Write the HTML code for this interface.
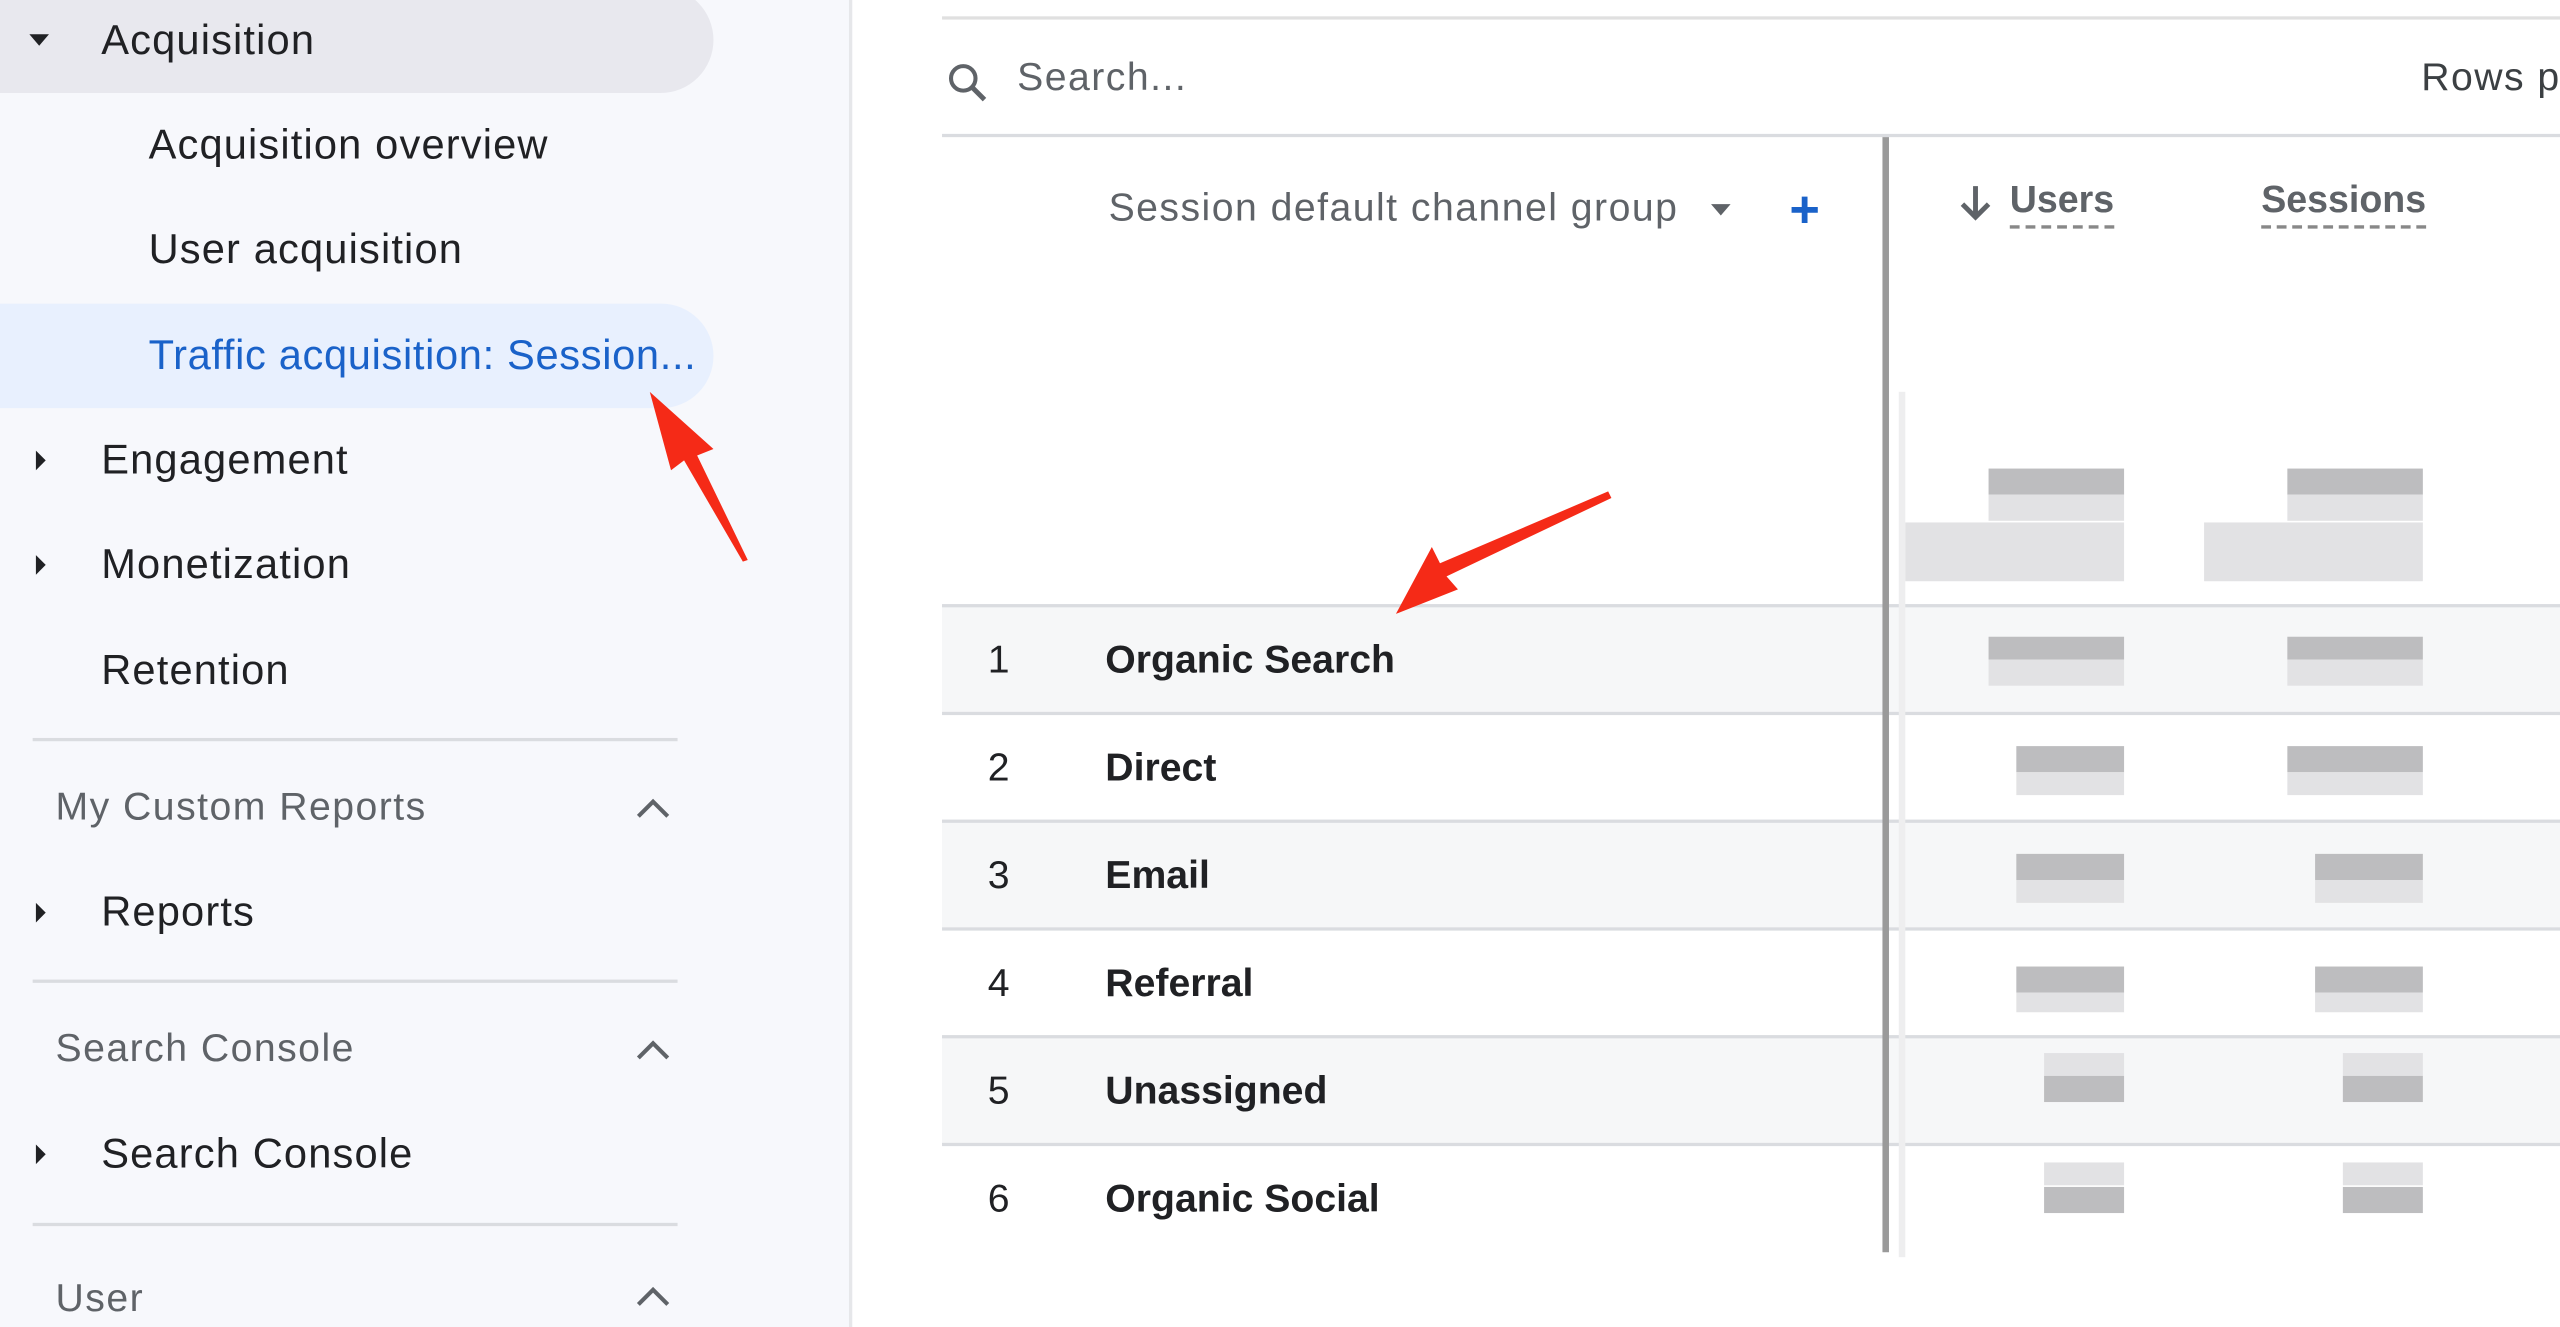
<!DOCTYPE html>
<html><head><meta charset="utf-8"><style>
html,body{margin:0;padding:0;width:2560px;height:1327px;overflow:hidden;background:#fff;font-family:"Liberation Sans",Arial,sans-serif}
#w{position:absolute;left:0;top:0;width:1568px;height:813px;transform:scale(1.63265);transform-origin:0 0;overflow:hidden}
.a{position:absolute;white-space:nowrap}
.side{position:absolute;left:0;top:0;width:520px;height:813px;background:#f7f8fc;border-right:2px solid #e6e7ea;overflow:hidden}
.t{font-size:25.5px;letter-spacing:0.7px;color:#202124;line-height:30px}
.g{font-size:24px;letter-spacing:0.9px;color:#5f6368;line-height:30px}
.div{position:absolute;left:20px;width:395px;height:2px;background:#dadce0}
.tri-r{position:absolute;width:0;height:0;border-top:6px solid transparent;border-bottom:6px solid transparent;border-left:6px solid #202124}
.row{position:absolute;left:577px;width:991px;height:65px;border-top:2px solid #dadce0}
.num{position:absolute;left:605px;font-size:24px;color:#202124}
.lab{position:absolute;left:677px;font-size:24px;font-weight:bold;color:#202124}
.b{position:absolute;background:#bdbdbf}
.l{position:absolute;background:#e2e2e4}
</style></head><body><div id="w">
<div class="side">
 <div class="a" style="left:-20px;top:-8px;width:457px;height:65px;background:#e8e8ee;border-radius:0 33px 33px 0"></div>
 <div class="a" style="left:18px;top:21px;width:0;height:0;border-left:6px solid transparent;border-right:6px solid transparent;border-top:7px solid #202124"></div>
 <div class="a t" style="left:62px;top:10px">Acquisition</div>
 <div class="a t" style="left:91px;top:74px">Acquisition overview</div>
 <div class="a t" style="left:91px;top:138px">User acquisition</div>
 <div class="a" style="left:-20px;top:186px;width:457px;height:64px;background:#e8f0fe;border-radius:0 32px 32px 0"></div>
 <div class="a t" style="left:91px;top:203px;color:#1a62c9;letter-spacing:0.4px">Traffic acquisition: Session...</div>
 <div class="tri-r" style="left:22px;top:276px"></div>
 <div class="a t" style="left:62px;top:267px">Engagement</div>
 <div class="tri-r" style="left:22px;top:340px"></div>
 <div class="a t" style="left:62px;top:331px">Monetization</div>
 <div class="a t" style="left:62px;top:396px">Retention</div>
 <div class="div" style="top:452px"></div>
 <div class="a g" style="left:34px;top:480px">My Custom Reports</div>
 <svg class="a" style="left:388px;top:485px" width="24" height="20"><path d="M3 15 L12 6 L21 15" stroke="#5f6368" stroke-width="2.5" fill="none"/></svg>
 <div class="tri-r" style="left:22px;top:553px"></div>
 <div class="a t" style="left:62px;top:544px">Reports</div>
 <div class="div" style="top:600px"></div>
 <div class="a g" style="left:34px;top:628px">Search Console</div>
 <svg class="a" style="left:388px;top:633px" width="24" height="20"><path d="M3 15 L12 6 L21 15" stroke="#5f6368" stroke-width="2.5" fill="none"/></svg>
 <div class="tri-r" style="left:22px;top:701px"></div>
 <div class="a t" style="left:62px;top:692px">Search Console</div>
 <div class="div" style="top:749px"></div>
 <div class="a g" style="left:34px;top:781px">User</div>
 <svg class="a" style="left:388px;top:784px" width="24" height="20"><path d="M3 15 L12 6 L21 15" stroke="#5f6368" stroke-width="2.5" fill="none"/></svg>
</div>
<div class="a" style="left:577px;top:10px;width:991px;height:2px;background:#e0e0e0"></div>
<svg class="a" style="left:580px;top:38px" width="26" height="26"><circle cx="10" cy="10" r="7.5" stroke="#5f6368" stroke-width="2.5" fill="none"/><path d="M15.5 15.5 L23 23" stroke="#5f6368" stroke-width="3"/></svg>
<div class="a g" style="left:623px;top:33px;color:#5f6368">Search...</div>
<div class="a g" style="left:1483px;top:33px;width:85px;overflow:hidden;color:#3c4043">Rows pe</div>
<div class="a" style="left:577px;top:82px;width:991px;height:2px;background:#dadce0"></div>
<div class="a g" style="left:679px;top:113px">Session default channel group</div>
<div class="a" style="left:1048px;top:125px;border-left:6px solid transparent;border-right:6px solid transparent;border-top:7px solid #5f6368"></div>
<div class="a" style="left:1096px;top:116px;font-size:32px;color:#1a62c9;line-height:24px;font-weight:bold">+</div>
<svg class="a" style="left:1199px;top:112px" width="22" height="24"><path d="M11 2 V20 M3 13 L11 21 L19 13" stroke="#5f6368" stroke-width="3" fill="none"/></svg>
<div class="a" style="left:1231px;top:109px;font-size:23px;font-weight:bold;color:#5f6368;border-bottom:2px dashed #888;padding-bottom:2px">Users</div>
<div class="a" style="left:1385px;top:109px;font-size:23px;font-weight:bold;color:#5f6368;border-bottom:2px dashed #888;padding-bottom:2px">Sessions</div>
<div class="row" style="top:370px;background:#f6f7f8"></div>
<div class="row" style="top:436px"></div>
<div class="row" style="top:502px;background:#f6f7f8"></div>
<div class="row" style="top:568px"></div>
<div class="row" style="top:634px;background:#f6f7f8"></div>
<div class="row" style="top:700px;height:70px"></div>
<div class="num" style="top:391px">1</div><div class="lab" style="top:391px">Organic Search</div>
<div class="num" style="top:457px">2</div><div class="lab" style="top:457px">Direct</div>
<div class="num" style="top:523px">3</div><div class="lab" style="top:523px">Email</div>
<div class="num" style="top:589px">4</div><div class="lab" style="top:589px">Referral</div>
<div class="num" style="top:655px">5</div><div class="lab" style="top:655px">Unassigned</div>
<div class="num" style="top:721px">6</div><div class="lab" style="top:721px">Organic Social</div>
<div class="a" style="left:1153px;top:84px;width:4px;height:683px;background:#9a9a9a"></div>
<div class="a" style="left:1163px;top:240px;width:4px;height:530px;background:#eeeeef"></div>
<div class="l" style="left:1167px;top:320px;width:134px;height:36px"></div>
<div class="l" style="left:1350px;top:320px;width:134px;height:36px"></div>
<div class="b" style="left:1218px;top:287px;width:83px;height:16px"></div><div class="l" style="left:1218px;top:303px;width:83px;height:16px"></div>
<div class="b" style="left:1401px;top:287px;width:83px;height:16px"></div><div class="l" style="left:1401px;top:303px;width:83px;height:16px"></div>
<div class="b" style="left:1218px;top:390px;width:83px;height:14px"></div><div class="l" style="left:1218px;top:404px;width:83px;height:16px"></div>
<div class="b" style="left:1401px;top:390px;width:83px;height:14px"></div><div class="l" style="left:1401px;top:404px;width:83px;height:16px"></div>
<div class="b" style="left:1235px;top:457px;width:66px;height:16px"></div><div class="l" style="left:1235px;top:473px;width:66px;height:14px"></div>
<div class="b" style="left:1401px;top:457px;width:83px;height:16px"></div><div class="l" style="left:1401px;top:473px;width:83px;height:14px"></div>
<div class="b" style="left:1235px;top:523px;width:66px;height:16px"></div><div class="l" style="left:1235px;top:539px;width:66px;height:14px"></div>
<div class="b" style="left:1418px;top:523px;width:66px;height:16px"></div><div class="l" style="left:1418px;top:539px;width:66px;height:14px"></div>
<div class="b" style="left:1235px;top:592px;width:66px;height:16px"></div><div class="l" style="left:1235px;top:608px;width:66px;height:12px"></div>
<div class="b" style="left:1418px;top:592px;width:66px;height:16px"></div><div class="l" style="left:1418px;top:608px;width:66px;height:12px"></div>
<div class="l" style="left:1252px;top:645px;width:49px;height:14px"></div><div class="b" style="left:1252px;top:659px;width:49px;height:16px"></div>
<div class="l" style="left:1435px;top:645px;width:49px;height:14px"></div><div class="b" style="left:1435px;top:659px;width:49px;height:16px"></div>
<div class="l" style="left:1252px;top:712px;width:49px;height:14px"></div><div class="b" style="left:1252px;top:727px;width:49px;height:16px"></div>
<div class="l" style="left:1435px;top:712px;width:49px;height:14px"></div><div class="b" style="left:1435px;top:727px;width:49px;height:16px"></div>
<svg class="a" style="left:0;top:0" width="1568" height="813">
 <polygon points="398,240 437,275 427,279 458,343 455,344 419,282 411,288" fill="#f52a17"/>
 <polygon points="855,376 877,335 882,345 985,301 987,305 886,353 893,361" fill="#f52a17"/>
</svg>
</div></body></html>
